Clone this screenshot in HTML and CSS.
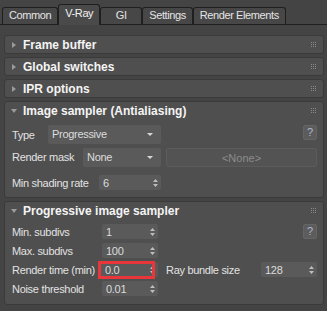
FILE: index.html
```html
<!DOCTYPE html>
<html lang="en">
  <head>
    <meta charset="UTF-8" />
    <title>V-Ray Render Setup</title>
    <link rel="stylesheet" href="styles.css">
  </head>
  <body>
    <!-- Tab strip -->
    <div class="tabs">
      <div class="tab">Common</div>
      <div class="tab active">V-Ray</div>
      <div class="tab">GI</div>
      <div class="tab">Settings</div>
      <div class="tab">Render Elements</div>
    </div>

    <div class="rollouts">
      <div class="rollout">
        <div class="rollout-head">
          <span class="arrow right"></span>
          <span class="title">Frame buffer</span>
          <svg class="grip" width="5" height="5" viewBox="0 0 5 5"><path d="M0 0h1v1H0zM2 0h1v1H2zM4 0h1v1H4zM0 2h1v1H0zM2 2h1v1H2zM4 2h1v1H4zM0 4h1v1H0zM2 4h1v1H2zM4 4h1v1H4z" fill="#8a8a8a"/></svg>
        </div>
      </div>

      <div class="rollout">
        <div class="rollout-head">
          <span class="arrow right"></span>
          <span class="title">Global switches</span>
          <svg class="grip" width="5" height="5" viewBox="0 0 5 5"><path d="M0 0h1v1H0zM2 0h1v1H2zM4 0h1v1H4zM0 2h1v1H0zM2 2h1v1H2zM4 2h1v1H4zM0 4h1v1H0zM2 4h1v1H2zM4 4h1v1H4z" fill="#8a8a8a"/></svg>
        </div>
      </div>

      <div class="rollout">
        <div class="rollout-head">
          <span class="arrow right"></span>
          <span class="title">IPR options</span>
          <svg class="grip" width="5" height="5" viewBox="0 0 5 5"><path d="M0 0h1v1H0zM2 0h1v1H2zM4 0h1v1H4zM0 2h1v1H0zM2 2h1v1H2zM4 2h1v1H4zM0 4h1v1H0zM2 4h1v1H2zM4 4h1v1H4z" fill="#8a8a8a"/></svg>
        </div>
      </div>

      <!-- Image sampler -->
      <div class="rollout">
        <div class="rollout-head">
          <span class="arrow down"></span>
          <span class="title">Image sampler (Antialiasing)</span>
          <svg class="grip" width="5" height="5" viewBox="0 0 5 5"><path d="M0 0h1v1H0zM2 0h1v1H2zM4 0h1v1H4zM0 2h1v1H0zM2 2h1v1H2zM4 2h1v1H4zM0 4h1v1H0zM2 4h1v1H2zM4 4h1v1H4z" fill="#8a8a8a"/></svg>
        </div>
        <div class="rollout-body sampler">
          <div class="field">
            <label>Type</label>
            <div class="dropdown w-type">Progressive<span class="caret"></span></div>
          </div>
          <div class="side"><button class="help">?</button></div>

          <div class="field">
            <label>Render mask</label>
            <div class="dropdown w-mask">None<span class="caret"></span></div>
          </div>
          <div class="side"><button class="pick">&lt;None&gt;</button></div>

          <div class="field spaced">
            <label>Min shading rate</label>
            <div class="spinner w-rate">6<svg class="spin" width="5" height="8" viewBox="0 0 5 8"><path d="M2.5 0L5 3H0zM0 5h5L2.5 8z" fill="#bdbdbd"/></svg></div>
          </div>
        </div>
      </div>

      <!-- Progressive image sampler -->
      <div class="rollout">
        <div class="rollout-head">
          <span class="arrow down"></span>
          <span class="title">Progressive image sampler</span>
          <svg class="grip" width="5" height="5" viewBox="0 0 5 5"><path d="M0 0h1v1H0zM2 0h1v1H2zM4 0h1v1H4zM0 2h1v1H0zM2 2h1v1H2zM4 2h1v1H4zM0 4h1v1H0zM2 4h1v1H2zM4 4h1v1H4z" fill="#8a8a8a"/></svg>
        </div>
        <div class="rollout-body progressive">
          <div class="field">
            <label>Min. subdivs</label>
            <div class="spinner">1<svg class="spin" width="5" height="8" viewBox="0 0 5 8"><path d="M2.5 0L5 3H0zM0 5h5L2.5 8z" fill="#bdbdbd"/></svg></div>
          </div>
          <div class="side"><button class="help">?</button></div>

          <div class="field">
            <label>Max. subdivs</label>
            <div class="spinner">100<svg class="spin" width="5" height="8" viewBox="0 0 5 8"><path d="M2.5 0L5 3H0zM0 5h5L2.5 8z" fill="#bdbdbd"/></svg></div>
          </div>
          <div class="side"></div>

          <div class="field">
            <label>Render time (min)</label>
            <div class="spinner marked">0.0<svg class="spin" width="5" height="8" viewBox="0 0 5 8"><path d="M2.5 0L5 3H0zM0 5h5L2.5 8z" fill="#bdbdbd"/></svg><span class="highlight"></span></div>
          </div>
          <div class="field">
            <label>Ray bundle size</label>
            <div class="spinner">128<svg class="spin" width="5" height="8" viewBox="0 0 5 8"><path d="M2.5 0L5 3H0zM0 5h5L2.5 8z" fill="#bdbdbd"/></svg></div>
          </div>

          <div class="field">
            <label>Noise threshold</label>
            <div class="spinner">0.01<svg class="spin" width="5" height="8" viewBox="0 0 5 8"><path d="M2.5 0L5 3H0zM0 5h5L2.5 8z" fill="#bdbdbd"/></svg></div>
          </div>
          <div class="side"></div>
        </div>
      </div>
    </div>
  </body>
</html>
```

FILE: styles.css
```css
/* Reset */
* {
  margin: 0;
  padding: 0;
  box-sizing: border-box;
}

body {
  background-color: #444444;
  color: #e2e2e2;
  font-family: "Liberation Sans", Arial, sans-serif;
  font-size: 11px;
  width: 327px;
  height: 311px;
  overflow: hidden;
}

/* Tabs */
.tabs {
  display: flex;
  align-items: flex-end;
  height: 25px;
  padding-left: 2px;
  border-bottom: 1px solid #1f1f1f;
}

.tab {
  height: 17px;
  min-width: 42px;
  padding: 0 6px;
  border: 1px solid #1f1f1f;
  border-bottom: none;
  border-radius: 3px 3px 0 0;
  background-color: #474747;
  color: #e4e4e4;
  text-align: center;
  line-height: 15px;
  letter-spacing: -0.4px;
}

.tab.active {
  height: 21px;
  margin-bottom: -1px;
  background-color: #4a4a4a;
  color: #f2f2f2;
  line-height: 17px;
}

/* Rollouts */
.rollouts {
  display: flex;
  flex-direction: column;
  gap: 3px;
  padding: 10px 3px 0 4px;
}

.rollout {
  background-color: #4f4f4f;
  border: 1px solid #3a3a3a;
  border-radius: 3px;
}

.rollout-head {
  display: flex;
  align-items: center;
  height: 17px;
  padding: 0 7px 0 6px;
}

.title {
  flex: 1;
  margin-left: 6px;
  color: #f4f4f4;
  font-size: 12px;
  font-weight: bold;
}

.arrow {
  width: 6px;
  height: 6px;
  display: flex;
  align-items: center;
  justify-content: center;
}

.arrow.right::before {
  content: "";
  border-left: 4px solid #9a9a9a;
  border-top: 3px solid transparent;
  border-bottom: 3px solid transparent;
}

.arrow.down::before {
  content: "";
  border-top: 4px solid #9a9a9a;
  border-left: 3px solid transparent;
  border-right: 3px solid transparent;
}

.grip {
  display: block;
}

/* Rollout content */
.rollout-body {
  display: grid;
  padding: 6px 6px 7px 7px;
}

.sampler {
  grid-template-columns: 149px 151px;
  column-gap: 5px;
  row-gap: 3px;
}

.progressive {
  grid-template-columns: 146px 151px;
  column-gap: 8px;
  row-gap: 4px;
  padding-top: 5px;
  padding-bottom: 8px;
}

.field {
  display: flex;
  align-items: center;
  justify-content: space-between;
  letter-spacing: -0.3px;
}

.field.spaced {
  margin-top: 5px;
}

.side {
  display: flex;
  justify-content: flex-end;
  align-items: flex-start;
}

.dropdown {
  position: relative;
  height: 19px;
  padding-left: 4px;
  border-radius: 2px;
  background-color: #5a5a5a;
  color: #dcdcdc;
  line-height: 19px;
}

.w-type {
  width: 113px;
}

.w-mask {
  width: 78px;
}

.caret {
  position: absolute;
  right: 8px;
  top: 8px;
  border-top: 3px solid #d8d8d8;
  border-left: 3px solid transparent;
  border-right: 3px solid transparent;
}

.spinner {
  position: relative;
  display: flex;
  align-items: center;
  justify-content: space-between;
  width: 56px;
  height: 15px;
  padding: 0 3px 0 4px;
  border-radius: 2px;
  background-color: #5a5a5a;
  color: #dcdcdc;
}

.w-rate {
  width: 62px;
}

.progressive .field:nth-child(5) .spinner {
  width: 57px;
}

.highlight {
  position: absolute;
  left: -3px;
  top: -1px;
  width: 57px;
  height: 18px;
  border: 3px solid #e8363a;
}

.help {
  width: 14px;
  height: 15px;
  border: 1px solid #656565;
  border-radius: 2px;
  background-color: #5c5c5c;
  color: #aeb6d2;
  font-family: "Liberation Sans", Arial, sans-serif;
  font-size: 11px;
  line-height: 13px;
}

.pick {
  width: 151px;
  height: 19px;
  border: 1px solid #5b5b5b;
  border-radius: 2px;
  background-color: #535353;
  color: #8c8c8c;
  font-family: "Liberation Sans", Arial, sans-serif;
  font-size: 11px;
  margin-top: 1px;
}
```
